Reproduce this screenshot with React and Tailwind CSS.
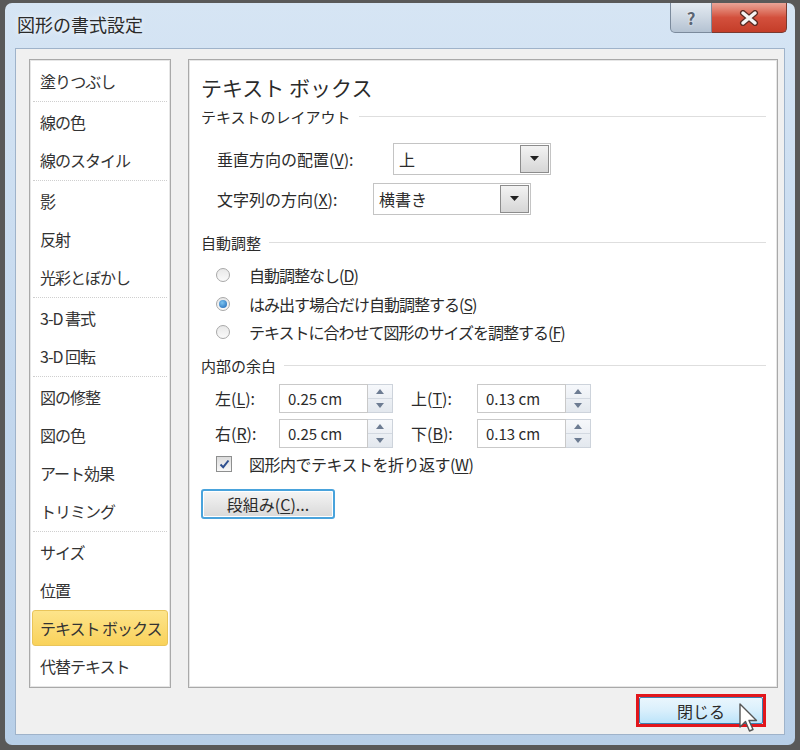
import React from 'react';

const listGroups = [
    ['塗りつぶし'],
    ['線の色', '線のスタイル'],
    ['影', '反射', '光彩とぼかし'],
    ['3-D 書式', '3-D 回転'],
    ['図の修整', '図の色', 'アート効果', 'トリミング'],
    ['サイズ', '位置', 'テキスト ボックス', '代替テキスト'],
];

const selectedItem = 'テキスト ボックス';

function Accel({ children }) {
    return <span className="underline underline-offset-2">{children}</span>;
}

function SectionHeader({ label }) {
    return (
        <div className="flex h-[20px] items-center gap-[8px] pr-[11px]">
            <span className="text-[15px] leading-none text-[#2b2b2b]">{label}</span>
            <div className="h-0 flex-1 border-t border-[#dedede]" />
        </div>
    );
}

function ComboBox({ value, width }) {
    return (
        <div
            className="flex items-stretch border border-[#c4c4c4] bg-white"
            style={{ width }}
        >
            <div className="flex flex-1 items-center pl-[5px] text-[16px] leading-none text-[#2b2b2b]">{value}</div>
            <div className="m-[1px] flex w-[29px] items-center justify-center border border-[#8c8c8c] bg-gradient-to-b from-[#f3f3f3] to-[#d6d6d6]">
                <svg width="9" height="6" viewBox="0 0 9 6">
                    <polygon points="0,0 9,0 4.5,5" fill="#222" />
                </svg>
            </div>
        </div>
    );
}

function SpinBox({ value }) {
    return (
        <div className="flex h-[29px] items-stretch">
            <div className="flex w-[89px] items-center border border-[#c9c9c9] bg-white pl-[8px] text-[15px] leading-none text-[#2b2b2b]">
                {value}
            </div>
            <div className="flex w-[25px] flex-col border border-l-0 border-[#cdd3db] bg-gradient-to-b from-[#f6f8fb] to-[#e3e8ee]">
                <div className="flex flex-1 items-center justify-center border-b border-[#d3d9e1]">
                    <svg width="8" height="5" viewBox="0 0 8 5">
                        <polygon points="0,5 8,5 4,0" fill="#6d7c92" />
                    </svg>
                </div>
                <div className="flex flex-1 items-center justify-center">
                    <svg width="8" height="5" viewBox="0 0 8 5">
                        <polygon points="0,0 8,0 4,5" fill="#6d7c92" />
                    </svg>
                </div>
            </div>
        </div>
    );
}

function Radio({ checked, children }) {
    return (
        <div className="flex h-[28.5px] items-center">
            <div className="ml-[15px] flex h-[14px] w-[14px] items-center justify-center rounded-full border border-[#a8a8a8] bg-gradient-to-b from-[#e8e8e8] to-[#fafafa]">
                {checked && (
                    <div className="h-[8px] w-[8px] rounded-full bg-[radial-gradient(circle_at_40%_35%,#7cc4f0,#1c64b4)]" />
                )}
            </div>
            <span className="ml-[19px] whitespace-nowrap text-[16px] leading-none tracking-[-1px] text-[#2b2b2b]">{children}</span>
        </div>
    );
}

function TitleBar() {
    return (
        <div className="flex h-[45px] items-start justify-between">
            <div className="pl-[12px] pt-[11px] text-[18px] leading-[20px] text-[#2a2a2a] [text-shadow:0_0_6px_#ffffff]">
                図形の書式設定
            </div>
            <div className="mr-[8px] flex h-[30px]">
                <div className="flex w-[42px] items-center justify-center rounded-bl-[5px] border border-t-0 border-[#7b8a9c] bg-gradient-to-b from-[#e4ebf2] via-[#cdd7e2] to-[#b4c2d2]">
                    <span className="text-[17px] font-bold leading-none text-[#5b6573] [text-shadow:0_0_2px_#fff]">?</span>
                </div>
                <div className="flex w-[75px] items-center justify-center rounded-br-[5px] border border-l-0 border-t-0 border-[#7a3a30] bg-gradient-to-b from-[#e9a497] via-[#d3503d] to-[#c43d28]">
                    <svg width="20" height="16" viewBox="0 0 20 16">
                        <path d="M4 3 L16 13 M16 3 L4 13" stroke="#5a2a22" strokeWidth="6" strokeLinecap="round" />
                        <path d="M4 3 L16 13 M16 3 L4 13" stroke="#f4f4f4" strokeWidth="3.5" strokeLinecap="round" />
                    </svg>
                </div>
            </div>
        </div>
    );
}

function CategoryList() {
    return (
        <div className="flex w-[142px] flex-col border border-[#a9a9a9] bg-white pt-[2px] shadow-[inset_0_0_0_1px_#e6e6e6]">
            {listGroups.map((group, gi) => (
                <React.Fragment key={gi}>
                    {gi > 0 && (
                        <div className="flex h-[3px] items-center px-[3px]">
                            <div className="h-0 w-full border-t border-dotted border-[#cfcfcf]" />
                        </div>
                    )}
                    {group.map((item) => {
                        const active = item === selectedItem;
                        return (
                            <div key={item} className="flex h-[38px] items-center px-[2px] py-[1px]">
                                <div
                                    className={
                                        active
                                            ? 'flex h-full w-full items-center rounded-[3px] border border-[#e9c55a] bg-gradient-to-b from-[#fde48a] to-[#f9d25a] pl-[7px]'
                                            : 'flex h-full w-full items-center pl-[8px]'
                                    }
                                >
                                    <span className="whitespace-nowrap text-[16px] leading-none tracking-[-1px] text-[#333]">{item}</span>
                                </div>
                            </div>
                        );
                    })}
                </React.Fragment>
            ))}
        </div>
    );
}

function TextBoxPanel() {
    return (
        <div className="flex w-[590px] flex-col border border-[#a9a9a9] bg-white pl-[12px] shadow-[inset_0_0_0_1px_#e6e6e6]">
            <div className="mt-[13px] h-[28px] text-[21px] leading-[28px] text-[#2a2a2a]">テキスト ボックス</div>

            <div className="mt-[5px]">
                <SectionHeader label="テキストのレイアウト" />
            </div>

            <div className="ml-[16px] mt-[17px] flex h-[32px] items-stretch">
                <div className="flex w-[176px] items-center text-[16px] leading-none text-[#2b2b2b]">
                    垂直方向の配置(<Accel>V</Accel>):
                </div>
                <ComboBox value="上" width={158} />
            </div>

            <div className="ml-[16px] mt-[8px] flex h-[32px] items-stretch">
                <div className="flex w-[156px] items-center text-[16px] leading-none text-[#2b2b2b]">
                    文字列の方向(<Accel>X</Accel>):
                </div>
                <ComboBox value="横書き" width={158} />
            </div>

            <div className="mt-[17px]">
                <SectionHeader label="自動調整" />
            </div>

            <div className="mt-[9px] flex flex-col">
                <Radio>自動調整なし(<Accel>D</Accel>)</Radio>
                <Radio checked>はみ出す場合だけ自動調整する(<Accel>S</Accel>)</Radio>
                <Radio>テキストに合わせて図形のサイズを調整する(<Accel>F</Accel>)</Radio>
            </div>

            <div className="mt-[9px]">
                <SectionHeader label="内部の余白" />
            </div>

            <div className="ml-[14px] mt-[8px] flex flex-col gap-[6px]">
                <div className="flex items-center">
                    <div className="w-[64px] text-[16px] leading-none text-[#2b2b2b]">左(<Accel>L</Accel>):</div>
                    <SpinBox value="0.25 cm" />
                    <div className="ml-[18px] w-[66px] text-[16px] leading-none text-[#2b2b2b]">上(<Accel>T</Accel>):</div>
                    <SpinBox value="0.13 cm" />
                </div>
                <div className="flex items-center">
                    <div className="w-[64px] text-[16px] leading-none text-[#2b2b2b]">右(<Accel>R</Accel>):</div>
                    <SpinBox value="0.25 cm" />
                    <div className="ml-[18px] w-[66px] text-[16px] leading-none text-[#2b2b2b]">下(<Accel>B</Accel>):</div>
                    <SpinBox value="0.13 cm" />
                </div>
            </div>

            <div className="ml-[15px] mt-[6px] flex h-[20px] items-center">
                <div className="flex h-[16px] w-[16px] items-center justify-center border border-[#8e8f8f] bg-gradient-to-b from-[#dcdcdc] to-[#f8f8f8]">
                    <svg width="11" height="10" viewBox="0 0 11 10">
                        <path d="M1.5 5.5 L4.2 8.2 L9.5 1.5" stroke="#2d4f8f" strokeWidth="2" fill="none" />
                    </svg>
                </div>
                <span className="ml-[17px] whitespace-nowrap text-[16px] leading-none tracking-[-0.5px] text-[#2b2b2b]">
                    図形内でテキストを折り返す(<Accel>W</Accel>)
                </span>
            </div>

            <button
                type="button"
                className="mt-[15px] flex h-[30px] w-[134px] items-center justify-center rounded-[3px] border-2 border-[#49a3dc] bg-gradient-to-b from-[#f5f5f5] to-[#d9d9d9] text-[16px] leading-none text-[#2b2b2b] shadow-[inset_0_0_0_1px_#ffffff]"
            >
                段組み(<Accel>C</Accel>)...
            </button>
        </div>
    );
}

export default function App() {
    return (
        <div className="h-[750px] w-[800px] bg-[#595959] pb-[5px] pl-[5px] pr-[5px] pt-[3px] font-['Noto_Sans_CJK_JP','Noto_Sans',sans-serif]">
            <div className="flex h-full w-full flex-col rounded-[7px] bg-gradient-to-b from-[#d6e5f4] via-[#c4d8ee] to-[#b8cfe8]">
                <TitleBar />
                <div className="mx-[10px] flex h-[687px] flex-col border border-[#9fb3ca] bg-[#f0f0f0] pl-[13px] pt-[10px]">
                    <div className="flex h-[629px] gap-[17px]">
                        <CategoryList />
                        <TextBoxPanel />
                    </div>
                    <div className="flex flex-1 justify-end pr-[18px] pt-[6px]">
                        <div className="relative h-[33px] w-[130px] border-[3px] border-[#e2161c]">
                            <button
                                type="button"
                                className="flex h-full w-full items-center justify-center rounded-[2px] border border-[#3c7fb1] bg-gradient-to-b from-[#eaf6fd] via-[#d9effc] to-[#bce4fa] text-[16px] leading-none text-[#2a2a2a]"
                            >
                                閉じる
                            </button>
                            <svg
                                className="absolute left-[100px] top-[6px]"
                                width="22"
                                height="32"
                                viewBox="0 0 22 32"
                            >
                                <path
                                    d="M1 1 L1 24 L6.5 18.5 L10.5 28 L14 26.5 L10 17.5 L17.5 17.5 Z"
                                    fill="#ffffff"
                                    stroke="#555"
                                    strokeWidth="1.4"
                                    strokeLinejoin="round"
                                />
                            </svg>
                        </div>
                    </div>
                </div>
            </div>
        </div>
    );
}
